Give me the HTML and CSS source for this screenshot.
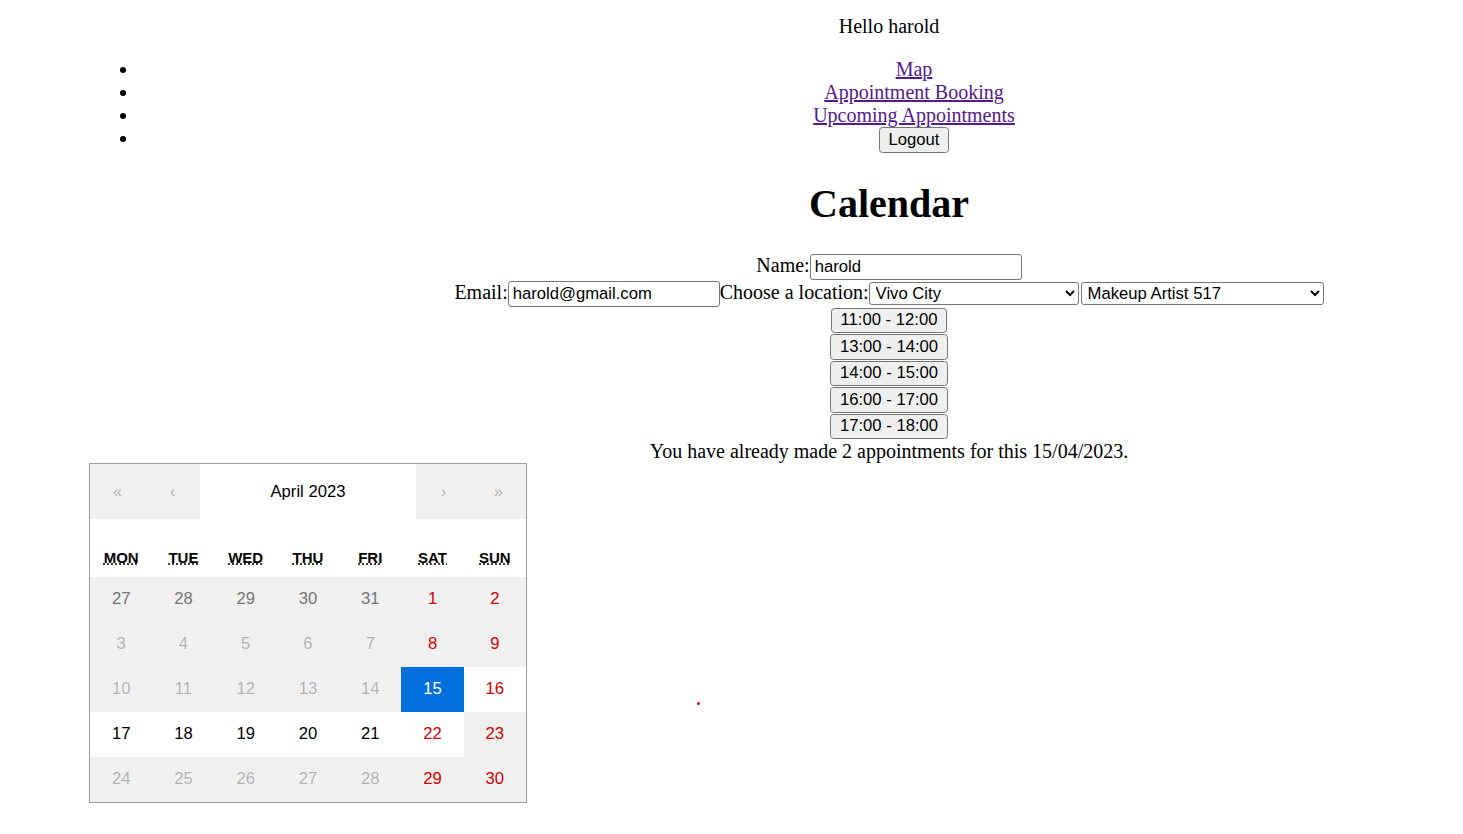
FILE: index.html
```html
<!DOCTYPE html>
<html lang="en">
<head>
<meta charset="utf-8">
<title>Calendar</title>
<link rel="stylesheet" href="styles.css">
</head>
<body>
<div class="app">
  <div class="greeting">Hello harold</div>
  <ul class="nav">
    <li><a href="#">Map</a></li>
    <li><a href="#">Appointment Booking</a></li>
    <li><a href="#">Upcoming Appointments</a></li>
    <li><button class="btn btn-logout">Logout</button></li>
  </ul>
  <h1 class="title">Calendar</h1>
  <form class="booking">
    <div class="row"><label for="name">Name:</label><input id="name" class="field" type="text" value="harold"></div>
    <div class="row"><label for="email">Email:</label><input id="email" class="field" type="text" value="harold@gmail.com"><label for="loc">Choose a location:</label><select id="loc" class="pick pick-loc"><option>Vivo City</option></select><select class="pick pick-artist"><option>Makeup Artist 517</option></select></div>
    <div class="slot"><button type="button" class="btn">11:00 - 12:00</button></div>
    <div class="slot"><button type="button" class="btn">13:00 - 14:00</button></div>
    <div class="slot"><button type="button" class="btn">14:00 - 15:00</button></div>
    <div class="slot"><button type="button" class="btn">16:00 - 17:00</button></div>
    <div class="slot"><button type="button" class="btn">17:00 - 18:00</button></div>
    <div class="note">You have already made 2 appointments for this 15/04/2023.</div>
  </form>
  <div class="calendar">
    <div class="cal-nav">
      <button class="cal-arrow" disabled>«</button>
      <button class="cal-arrow" disabled>‹</button>
      <button class="cal-label">April 2023</button>
      <button class="cal-arrow" disabled>›</button>
      <button class="cal-arrow" disabled>»</button>
    </div>
    <div class="weekdays">
      <div class="wd"><abbr title="Monday">Mon</abbr></div>
      <div class="wd"><abbr title="Tuesday">Tue</abbr></div>
      <div class="wd"><abbr title="Wednesday">Wed</abbr></div>
      <div class="wd"><abbr title="Thursday">Thu</abbr></div>
      <div class="wd"><abbr title="Friday">Fri</abbr></div>
      <div class="wd"><abbr title="Saturday">Sat</abbr></div>
      <div class="wd"><abbr title="Sunday">Sun</abbr></div>
    </div>
    <div class="days">
      <button class="tile off nb" disabled>27</button>
      <button class="tile off nb" disabled>28</button>
      <button class="tile off nb" disabled>29</button>
      <button class="tile off nb" disabled>30</button>
      <button class="tile off nb" disabled>31</button>
      <button class="tile off we" disabled>1</button>
      <button class="tile off we" disabled>2</button>
      <button class="tile off" disabled>3</button>
      <button class="tile off" disabled>4</button>
      <button class="tile off" disabled>5</button>
      <button class="tile off" disabled>6</button>
      <button class="tile off" disabled>7</button>
      <button class="tile off we" disabled>8</button>
      <button class="tile off we" disabled>9</button>
      <button class="tile off" disabled>10</button>
      <button class="tile off" disabled>11</button>
      <button class="tile off" disabled>12</button>
      <button class="tile off" disabled>13</button>
      <button class="tile off" disabled>14</button>
      <button class="tile active">15</button>
      <button class="tile we">16</button>
      <button class="tile">17</button>
      <button class="tile">18</button>
      <button class="tile">19</button>
      <button class="tile">20</button>
      <button class="tile">21</button>
      <button class="tile we">22</button>
      <button class="tile off we" disabled>23</button>
      <button class="tile off" disabled>24</button>
      <button class="tile off" disabled>25</button>
      <button class="tile off" disabled>26</button>
      <button class="tile off" disabled>27</button>
      <button class="tile off" disabled>28</button>
      <button class="tile off we" disabled>29</button>
      <button class="tile off we" disabled>30</button>
    </div>
  </div>
</div>
<span class="dot"></span>
</body>
</html>
```

FILE: styles.css
```css
body {
  margin: 10px;
  font-family: "Liberation Serif", "Times New Roman", serif;
  font-size: 20px;
  color: #000;
  background: #fff;
  position: relative;
}

/* centred content sits on an axis at x=889; the calendar and the list pull back to the left edge */
.app {
  margin-left: 79px;
  padding-left: 236px;
  text-align: center;
}

.greeting {
  padding-top: 5px;
}

.nav {
  margin: 20px 0 20px -236px;
  padding-left: 50px;
}

.nav li {
  padding-left: 236px;
}

.nav a {
  color: #551a8b;
}

.title {
  font-size: 40px;
  font-weight: bold;
  margin: 26.8px 0;
}

.booking {
  margin: 0;
}

.row {
  height: 27px;
}

.slot {
  height: 26.5px;
}

.field {
  box-sizing: border-box;
  width: 212px;
  height: 26px;
  margin: 0;
  padding: 1px 4px;
  border: 1px solid #767676;
  border-radius: 3px;
  font-family: "Liberation Sans", Arial, sans-serif;
  font-size: 16.67px;
  color: #000;
  background: #fff;
}

.pick {
  box-sizing: border-box;
  height: 23px;
  margin: 0;
  padding: 0 2px;
  border: 1px solid #767676;
  border-radius: 3px;
  font-family: "Liberation Sans", Arial, sans-serif;
  font-size: 16.67px;
  color: #000;
  background: #fff;
}

.pick-loc {
  width: 210px;
}

.pick-artist {
  width: 243px;
  margin-left: 2px;
}

.btn {
  margin: 0;
  padding: 1.25px 8.5px;
  border: 1px solid #767676;
  border-radius: 3.5px;
  background: #efefef;
  color: #000;
  font-family: "Liberation Sans", Arial, sans-serif;
  font-size: 16.67px;
  height: 25.5px;
}

.slot .btn {
  vertical-align: 1px;
}

.btn-logout {
  height: 26px;
  padding: 1.25px 9px;
}

.calendar {
  box-sizing: border-box;
  width: 438px;
  margin-left: -236px;
  border: 1px solid #a0a096;
  background: #fff;
  font-family: "Liberation Sans", Arial, sans-serif;
  line-height: 22.5px;
  text-align: left;
}

.cal-nav {
  display: flex;
  height: 55px;
  margin-bottom: 20px;
}

.cal-nav button {
  margin: 0;
  border: 0;
  padding: 0;
  font-family: "Liberation Sans", Arial, sans-serif;
  font-size: 16.67px;
}

.cal-arrow {
  min-width: 55px;
  background: #f0f0f0;
  color: rgba(16, 16, 16, 0.3);
}

.cal-label {
  flex-grow: 1;
  background: #fff;
  color: #000;
}

.weekdays {
  display: grid;
  grid-template-columns: repeat(7, 1fr);
  text-align: center;
  text-transform: uppercase;
  font-weight: bold;
  font-size: 15px;
}

.wd {
  padding: 7.5px;
}

.wd abbr {
  text-decoration: underline dotted;
}

.days {
  display: grid;
  grid-template-columns: repeat(7, 1fr);
}

.tile {
  margin: 0;
  border: 0;
  padding: 12.5px 8.33px;
  line-height: 20px;
  text-align: center;
  font-family: "Liberation Sans", Arial, sans-serif;
  font-size: 16.67px;
  background: #fff;
  color: #000;
}

.tile.off {
  background: #f0f0f0;
  color: rgba(16, 16, 16, 0.3);
}

.tile.nb {
  color: #757575;
}

.tile.we {
  color: #d10000;
}

.tile.active {
  background: #006edc;
  color: #fff;
}

.dot {
  position: absolute;
  left: 687px;
  top: 692px;
  width: 3px;
  height: 3px;
  border-radius: 50%;
  background: #e00000;
}
```
